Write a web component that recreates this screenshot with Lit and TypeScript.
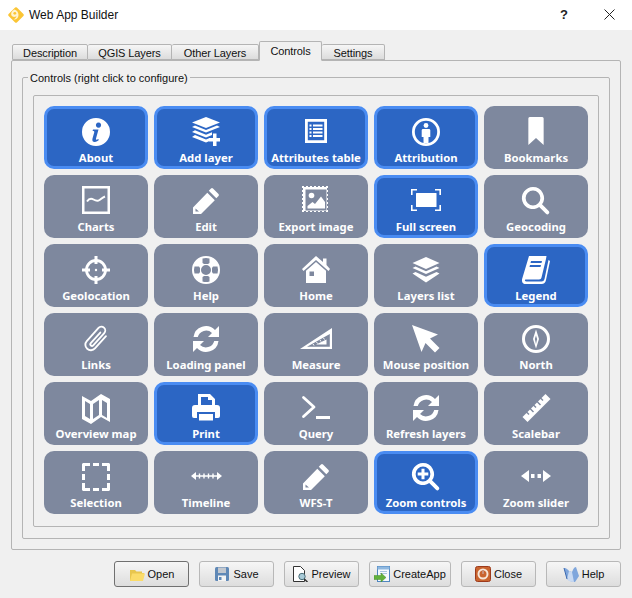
import { LitElement, html, css, svg } from "lit";
import { customElement } from "lit/decorators.js";

const refresh = svg`<path d="M27 1v11H16l4-4A8.500 8.500 0 0 0 5.800 12H1.500A12.500 12.500 0 0 1 23 5z"/><path d="M1 27V16h11l-4 4A8.500 8.500 0 0 0 22.200 16h4.300A12.500 12.500 0 0 1 5 23z"/>`;
const pencil = svg`<path fill-rule="evenodd" d="M21 1.500l5.500 5.500a1.500 1.500 0 0 1 0 2l-2.200 2.200-7.500-7.500L19 1.500a1.500 1.500 0 0 1 2 0zM15.300 5.700l7.500 7.500L9 27H1v-6.500zM3.500 21.500v3H7z"/>`;
const lens = "M11 0a11 11 0 0 1 9 17.300l6.700 6.700a1.900 1.900 0 0 1-2.700 2.700l-6.800-6.700A11 11 0 1 1 11 0zM11 3.600a7.400 7.400 0 1 0 0 14.800a7.400 7.400 0 0 0 0-14.800z";

const ICONS: Record<string, unknown> = {
  about: svg`<path fill-rule="evenodd" d="M14 0a14 14 0 1 1 0 28a14 14 0 0 1 0-28zM16.500 4.500a2.600 2.600 0 1 0 0.010 0zM11 11.500l-.4 1.400c1.500-.1 2 .3 1.600 1.700l-1.700 6c-.7 2.600.6 3.500 2.300 3.400 1.700-.1 3-.9 4-1.900l-.5-1.100c-.8.6-1.500.9-2 .8-.4-.1-.5-.5-.3-1.200l2.500-9.100z"/>`,
  addlayer: svg`<path d="M14 -1l14 5.500-14 5.500L0 4.500z"/><path d="M3 7.500L14 12l11-4.500 3 1.500-14 5.500L0 9z"/><path d="M3 12.200L14 16.700l6-2.400v2.700l-6 2.500L0 14z"/><path d="M3 17l11 4.500 3-1.200v3l-3 1.200L0 19z"/><path d="M21 15.500h3.500V20H28v3.500h-3.500V28H21v-4.500h-4V20h4z"/>`,
  table: svg`<path fill-rule="evenodd" d="M3 1h22v24H3zM5.800 3.800v18.400h16.400V3.800z"/><path d="M7.500 6.500h2v2h-2zM11 6.500h9.500v2H11zM7.500 10h2v2h-2zM11 10h9.500v2H11zM7.500 13.500h2v2h-2zM11 13.500h9.500v2H11zM7.500 17h2v2h-2zM11 17h9.500v2H11z"/>`,
  attribution: svg`<path fill-rule="evenodd" d="M14 0a14 14 0 1 1 0 28a14 14 0 0 1 0-28zM14 2.800a11.200 11.200 0 1 0 0 22.400a11.200 11.200 0 0 0 0-22.400z"/><circle cx="14" cy="7.500" r="2.400"/><path d="M10.500 11h7l.8 1v7h-1.800v6h-5v-6H9.700v-7z"/>`,
  bookmark: svg`<path d="M7 -1h14a1.500 1.500 0 0 1 1.500 1.500V27L14 20 5.500 27V.5A1.500 1.500 0 0 1 7-1z" transform="translate(1.400 0) scale(.9 1)"/>`,
  charts: svg`<path fill-rule="evenodd" d="M0 -1h28v28H0zM2.500 1.500v23h23v-23z"/><path d="M5 14.500c2-3 4-3.500 6.500-2s4 2 6 .5 3-2.500 5.500-3.500" fill="none" stroke="currentColor" stroke-width="2"/>`,
  edit: pencil,
  image: svg`<path fill-rule="evenodd" d="M0 -1h2v1h2v-1h2v1h2v-1h2v1h2v-1h2v1h2v-1h2v1h2v-1h2v1h2v-1h2v2h-1v2h1v2h-1v2h1v2h-1v2h1v2h-1v2h1v2h-1v2h1v2h-1v2h1v2h-2v-1h-2v1h-2v-1h-2v1h-2v-1h-2v1h-2v-1h-2v1H8v-1H6v1H4v-1H2v1H0v-2h1v-2H0v-2h1v-2H0v-2h1v-2H0v-2h1v-2H0V7h1V5H0V3h1V1H0zM3.500 2.500v21h21v-21z"/><circle cx="9.500" cy="8.500" r="2.800"/><path d="M5.500 21.500v-2.500l5-4 2.500 2 6-7.500 4 5.500v6.500z"/>`,
  fullscreen: svg`<path d="M-1 2h6v1.600H.6V8H-1zM29 2h-6v1.600h4.400V8H29zM-1 24h6v-1.600H.6V18H-1zM29 24h-6v-1.600h4.400V18H29z"/><rect x="4" y="6" width="20.500" height="14" rx=".5"/>`,
  search: svg`<path fill-rule="evenodd" d="${lens}"/>`,
  geo: svg`<circle cx="14" cy="14" r="9.500" fill="none" stroke="currentColor" stroke-width="2.800"/><path d="M12.500 0h3v8h-3zM12.500 20h3v8h-3zM0 12.500h8v3H0zM20 12.500h8v3h-8z"/><circle cx="14" cy="14" r="1.200"/>`,
  help: svg`<path fill-rule="evenodd" d="M14 0a14 14 0 1 1 0 28a14 14 0 0 1 0-28zM14 9a5 5 0 1 0 0 10a5 5 0 0 0 0-10zM10.500 2.500v4.500l1.500 1h4l1.500-1V2.500a12 12 0 0 0-7 0zM10.500 25.500V21l1.500-1h4l1.500 1v4.500a12 12 0 0 1-7 0zM2.500 10.500H7l1 1.500v4l-1 1.500H2.500a12 12 0 0 1 0-7zM25.500 10.500H21l-1 1.500v4l1 1.500h4.500a12 12 0 0 0 0-7z"/>`,
  home: svg`<path d="M14 0l7 6V2.500h3.500V9L28 13l-1.500 2L14 4 1.500 15 0 13z"/><path fill-rule="evenodd" d="M14 6l10 8.800V27h-7V18h-3.500v0H17v0h-6.500v0H17V27H4V14.800zM7.500 15.500V20H12v-4.500z"/>`,
  layers: svg`<path d="M14 1l13.500 6L14 13 .5 7z" /><path d="M3.500 10.500L14 15.200l10.500-4.700L27.500 12 14 18 .5 12z"/><path d="M3.500 15.500L14 20.200l10.500-4.700L27.500 17 14 26 .5 17z" transform="translate(0 .5)"/>`,
  legend: svg`<path fill-rule="evenodd" d="M7 0h17.500L24 3 19.500 21.500c-.3 1.300-1 2-2.500 2H4c-1 0-1.300.7-1 1.200.2.500.7.800 1.500.8h15c1.500 0 2.500-.8 3-2.500L26.500 4 28 5 24 24c-.5 2.500-2 4-4.500 4H3.500C1 28-.5 26 .1 23zM9 5l-.5 2h11l.5-2zM8 9l-.5 2h11l.5-2z"/>`,
  links: svg`<path d="M19 6v15a5 5 0 0 1-10 0V5a3.500 3.500 0 0 1 7 0v15a1.500 1.500 0 0 1-3 0V7" fill="none" stroke="currentColor" stroke-width="1.700" stroke-linecap="round" transform="rotate(42 14 14) translate(-1.400 -1.400) scale(1.100)"/>`,
  refresh,
  measure: svg`<path fill-rule="evenodd" d="M30 3v21H-2zM27.800 9L5 21.800h22.800zM24.500 14.500v5H14z"/><path d="M11 19l1 1.500M14.500 17l1 1.500M18 15l1 1.500M21.500 13l1 1.500" stroke="currentColor" stroke-width="1"/>`,
  mouse: svg`<path d="M0 0l26 9.500-8 4 9.500 9.500-4.500 4.500-9.500-9.500L9.500 27z"/>`,
  north: svg`<path fill-rule="evenodd" d="M14 0a14 14 0 1 1 0 28a14 14 0 0 1 0-28zM14 3a11 11 0 1 0 0 22a11 11 0 0 0 0-22z"/><path d="M14 4.500l3 9.500-3 9.500-3-9.500z"/><path d="M14 10.500l1.100 3.500L14 19l-1.100-5z" fill="var(--bg)"/>`,
  map: svg`<path fill-rule="evenodd" d="M0 2l9 5 10-7 9 5v23l-9-5-10 7-9-5zM3 7v15l5 3V10zM11 10v15l6-4V6zM20 6v15l5 3V9z"/>`,
  print: svg`<path fill-rule="evenodd" d="M6 0h12l5 5v6h-3V6h-4V3H9v8H6zM3 11h22a3 3 0 0 1 3 3v8a2 2 0 0 1-2 2h-3v-6H5v6H2a2 2 0 0 1-2-2v-8a3 3 0 0 1 3-3zM7 20h14v6.500H7z"/>`,
  query: svg`<path d="M1.500 3.500L12 13 1.500 22.500" fill="none" stroke="currentColor" stroke-width="2.800" stroke-linecap="round" stroke-linejoin="round"/><path d="M14 22h14v3H14z"/>`,
  ruler: svg`<path fill-rule="evenodd" d="M23 0l5 5L5 28l-5-5zM19 4l2 2-1 1-2-2zM15.500 7.500l3 3-1 1-3-3zM12 11l2 2-1 1-2-2zM8.500 14.500l3 3-1 1-3-3zM5 18l2 2-1 1-2-2z" transform="translate(.500 0)"/>`,
  selection: svg`<path d="M1 0h7v3H3v5H0V1zM11 0h6v3h-6zM20 0h7l1 1v7h-3V3h-5zM25 11h3v6h-3zM28 20v7l-1 1h-7v-3h5v-5zM17 28h-6v-3h6zM8 28H1l-1-1v-7h3v5h5zM3 17H0v-6h3z"/>`,
  timeline: svg`<path d="M-1 13l5-4v8zM30 13l-5-4v8z"/><path d="M2 13h25M7.500 10.500v5M12 10.500v5M16.500 10.500v5M21 10.500v5" stroke="currentColor" stroke-width="1.400" fill="none"/>`,
  zoom: svg`<path fill-rule="evenodd" d="${lens}"/><path d="M9.500 5.700h3V9.500h3.800v3h-3.800v3.800h-3v-3.800H5.700v-3h3.800z"/>`,
  slider: svg`<path d="M-1 13l8-6v12zM29 13l-8-6v12zM9 11h3.500v4H9zM15.500 11H19v4h-3.500z"/>`,
};

interface Ctl { label: string; icon: string; on?: boolean; }
const CONTROLS: Ctl[] = [
  { label: "About", icon: "about", on: true },
  { label: "Add layer", icon: "addlayer", on: true },
  { label: "Attributes table", icon: "table", on: true },
  { label: "Attribution", icon: "attribution", on: true },
  { label: "Bookmarks", icon: "bookmark" },
  { label: "Charts", icon: "charts" },
  { label: "Edit", icon: "edit" },
  { label: "Export image", icon: "image" },
  { label: "Full screen", icon: "fullscreen", on: true },
  { label: "Geocoding", icon: "search" },
  { label: "Geolocation", icon: "geo" },
  { label: "Help", icon: "help" },
  { label: "Home", icon: "home" },
  { label: "Layers list", icon: "layers" },
  { label: "Legend", icon: "legend", on: true },
  { label: "Links", icon: "links" },
  { label: "Loading panel", icon: "refresh" },
  { label: "Measure", icon: "measure" },
  { label: "Mouse position", icon: "mouse" },
  { label: "North", icon: "north" },
  { label: "Overview map", icon: "map" },
  { label: "Print", icon: "print", on: true },
  { label: "Query", icon: "query" },
  { label: "Refresh layers", icon: "refresh" },
  { label: "Scalebar", icon: "ruler" },
  { label: "Selection", icon: "selection" },
  { label: "Timeline", icon: "timeline" },
  { label: "WFS-T", icon: "edit" },
  { label: "Zoom controls", icon: "zoom", on: true },
  { label: "Zoom slider", icon: "slider" },
];

const TABS: [string, number][] = [["Description", 76], ["QGIS Layers", 84], ["Other Layers", 87], ["Controls", 63], ["Settings", 63]];

const FOOT: Record<string, unknown> = {
  Open: svg`<path d="M1 4h5l1.500 1.500H13V7H15l-1.500 8H1z" fill="#e8c64e"/><path d="M3 7.500h13L14 15H1z" fill="#fbdc6a"/>`,
  Save: svg`<rect x="1" y="1" width="14" height="14" rx="1.500" fill="#5f88b6"/><rect x="4" y="1.500" width="8" height="5.500" fill="#c3c8cf"/><rect x="4" y="9.500" width="8" height="5.500" fill="#f3f3f3"/><rect x="5" y="11" width="2.500" height="3" fill="#5f88b6"/>`,
  Preview: svg`<path d="M1.500 .500h7l4 4v11h-11z" fill="#fff" stroke="#333"/><circle cx="10" cy="10.500" r="3.200" fill="#a9cbd8" stroke="#4a6d78"/><path d="M12.300 13l3.200 3" stroke="#333" stroke-width="1.500"/>`,
  CreateApp: svg`<rect x="3.500" y=".500" width="12" height="15" fill="#f5f9fd" stroke="#4f86c0"/><path d="M3.500 .500h12v3h-12z" fill="#8fb8e0"/><path d="M6 5.500h7M6 7.500h7" stroke="#a8c4de"/><path d="M0 9.500h7V7l5 4.500-5 4.500v-2.500H0z" fill="#62b13c" stroke="#4a8e2a" stroke-width=".5"/>`,
  Close: svg`<rect x=".500" y=".500" width="15" height="15" rx="2" fill="#c9642f" stroke="#9c3a1c"/><circle cx="8" cy="8" r="4.500" fill="none" stroke="#f6e6d8" stroke-width="2"/><path d="M8 3v5" stroke="#f6e6d8" stroke-width="2"/><path d="M8 4v4" stroke="#9c3a1c" stroke-width="1"/>`,
  Help: svg`<path d="M1 2c3 0 4 2 5 3l3 1c1-2 2-5 4-5l3 9-4 6c-3 0-6-1-8-3z" fill="#7fa6dc"/><path d="M6 5l3 1 2 10c-3 0-6-1-7-3z" fill="#c9daf2"/><path d="M1 2l3 11" stroke="#3a68b0"/>`,
};

@customElement("app-root")
export class AppRoot extends LitElement {
  static styles = css`
    :host { display: flex; flex-direction: column; width: 632px; height: 598px; background: #f0f0f0; font-family: "Liberation Sans", Arial, sans-serif; font-size: 11px; color: #111; overflow: hidden; }
    .title { height: 30px; background: #fff; display: flex; align-items: center; flex: none; padding: 0 0 0 8px; font-size: 12px; }
    .logo { width: 16px; height: 16px; margin-right: 5px; }
    .title span { flex: 1; }
    .q { width: 46px; text-align: center; font-size: 13px; font-weight: bold; color: #222; margin-left: 1px; padding-bottom: 2px; margin-right: -1px; }
    .x { width: 46px; height: 30px; display: flex; align-items: center; justify-content: center; }
    .x svg { width: 11px; height: 11px; margin-bottom: 2px; }
    .main { padding: 11px 11px 0 11px; flex: none; }
    .tabs { display: flex; align-items: flex-end; padding-left: 1px; height: 20px; position: relative; z-index: 1; margin-bottom: -1px; }
    .tab { height: 16px; box-sizing: border-box; padding-top: 1px; letter-spacing: -0.1px; border: 1px solid #b4b4b4; border-left: 0; border-radius: 2px 2px 0 0; background: linear-gradient(#f6f6f6, #dcdcdc); display: flex; align-items: center; justify-content: center; margin-bottom: 1px; }
    .tab:first-child { border-left: 1px solid #b4b4b4; }
    .tab.active { height: 20px; background: #f0f0f0; border-bottom-color: #f0f0f0; border-left: 1px solid #b4b4b4; margin-bottom: 0; padding-top: 0; padding-bottom: 1px; }
    .pane { height: 490px; box-sizing: border-box; border: 1px solid #b4b4b4; border-radius: 2px; padding: 8px 10px 0 10px; }
    fieldset { margin: 0; border: 1px solid #b4b4b4; border-radius: 2px; padding: 0 10px 11px; min-width: 0; }
    legend { padding: 0 2px; margin-left: -5px; font-size: 11px; line-height: 18px; height: 16px; }
    .inner { margin-top: 10px; border: 1px solid #b4b4b4; border-radius: 2px; padding: 10px 10px 12px; display: grid; grid-template-columns: repeat(5, 104px); grid-auto-rows: 63px; gap: 6px; }
    .ctl { --bg: #7e889e; background: var(--bg); border-radius: 10px; box-sizing: border-box; color: #fff; display: flex; flex-direction: column; align-items: center; padding-top: 12px; font-family: "Noto Sans", sans-serif; font-weight: bold; font-size: 11.3px; }
    .ctl.on { --bg: #2c66c4; border: 3px solid #4a8cf2; padding-top: 9px; }
    .ctl svg { width: 28px; height: 28px; fill: currentColor; display: block; flex: none; overflow: visible; }
    .ctl .lbl { line-height: 14px; margin-top: 5px; white-space: nowrap; }
    .foot { display: flex; justify-content: flex-end; gap: 10px; padding: 11px 0 0 0; }
    .btn { height: 26px; width: 75px; box-sizing: border-box; border: 1px solid #b8b8b8; border-radius: 3px; background: linear-gradient(#f6f6f6, #dddddd); display: flex; align-items: center; justify-content: center; gap: 3px; font-size: 11px; }
    .btn.wide { width: 82px; }
    .btn.def { border-color: #707070; }
    .btn svg { width: 16px; height: 16px; flex: none; }
  `;

  render() {
    return html`
      <div class="title">
        <svg class="logo" viewBox="0 0 16 16"><path d="M8 1.500L14.500 8 8 14.500 1.500 8z" fill="#fbc534" stroke="#fbc534" stroke-width="2.500" stroke-linejoin="round"/><path d="M6.500 2.500C3.500 4 2.500 6.500 3.500 8.500c1 1.700 3.500 1.800 5 .5-.3 1.500-1.300 2.800-3 3.500 3 .3 5-2 5-4.500 0-3-2-5-4-5.500z" fill="#fff3d0"/><circle cx="6.800" cy="6.300" r="1.400" fill="#fbc534"/></svg>
        <span>Web App Builder</span>
        <div class="q">?</div>
        <div class="x"><svg viewBox="0 0 11 11"><path d="M.5.500l10 10M10.500.500l-10 10" stroke="#222" fill="none"/></svg></div>
      </div>
      <div class="main">
        <div class="tabs">
          ${TABS.map(([t, w]) => html`<div class="tab ${t === "Controls" ? "active" : ""}" style="width:${w}px">${t}</div>`)}
        </div>
        <div class="pane">
          <fieldset>
            <legend>Controls (right click to configure)</legend>
            <div class="inner">
              ${CONTROLS.map((c) => html`<div class="ctl ${c.on ? "on" : ""}"><svg viewBox="0 0 28 28">${ICONS[c.icon]}</svg><div class="lbl">${c.label}</div></div>`)}
            </div>
          </fieldset>
        </div>
        <div class="foot">
          ${Object.keys(FOOT).map((k) => html`<div class="btn ${k === "CreateApp" ? "wide" : ""} ${k === "Open" ? "def" : ""}"><svg viewBox="0 0 16 16">${FOOT[k]}</svg>${k}</div>`)}
        </div>
      </div>
    `;
  }
}
